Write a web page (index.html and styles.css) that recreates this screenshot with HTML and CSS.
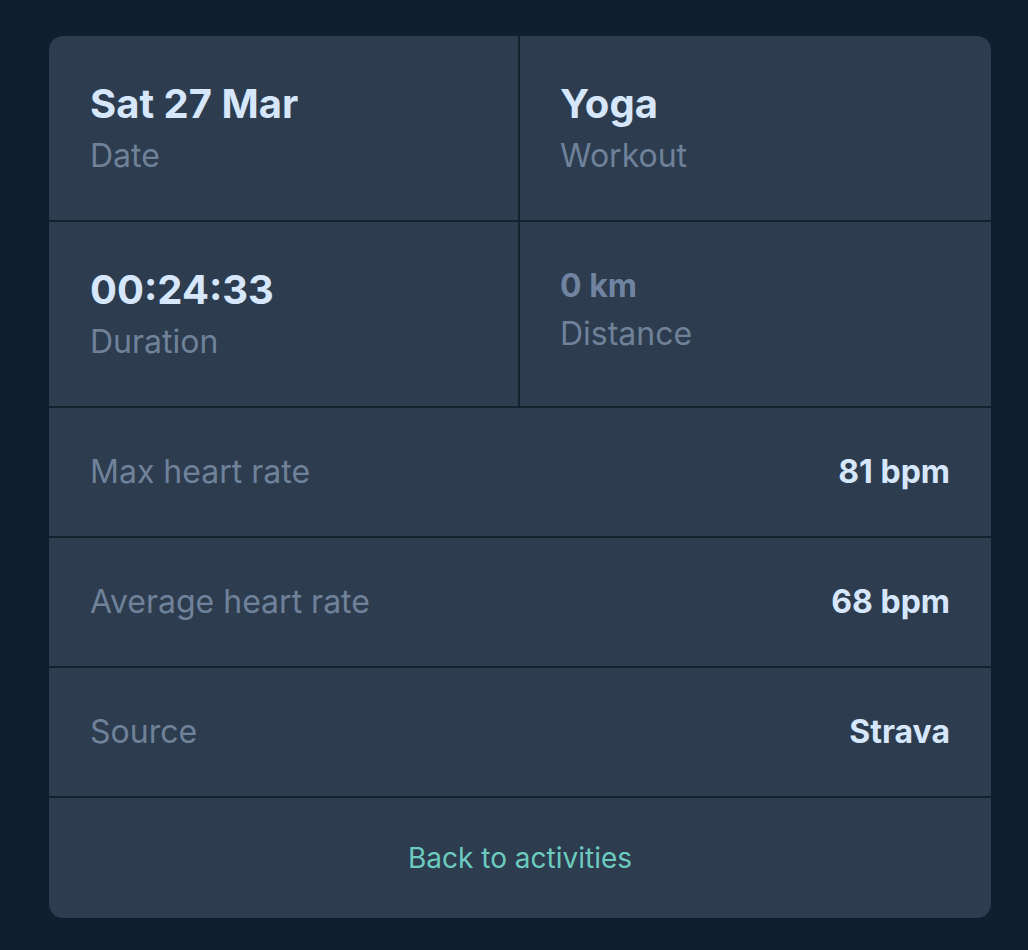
FILE: index.html
```html
<!DOCTYPE html>
<html lang="en">
<head>
<meta charset="utf-8">
<title>Activity</title>
<link rel="stylesheet" href="styles.css">
</head>
<body>
<main class="page">
  <section class="card">
    <div class="grid">
      <div class="cell cell-left">
        <div class="value">Sat 27 Mar</div>
        <div class="label">Date</div>
      </div>
      <div class="cell cell-right">
        <div class="value">Yoga</div>
        <div class="label">Workout</div>
      </div>
      <div class="cell cell-left">
        <div class="value">00:24:33</div>
        <div class="label">Duration</div>
      </div>
      <div class="cell cell-right">
        <div class="value-muted">0 km</div>
        <div class="label">Distance</div>
      </div>
    </div>
    <div class="row">
      <span class="label">Max heart rate</span>
      <span class="row-value">81 bpm</span>
    </div>
    <div class="row">
      <span class="label">Average heart rate</span>
      <span class="row-value">68 bpm</span>
    </div>
    <div class="row">
      <span class="label">Source</span>
      <span class="row-value">Strava</span>
    </div>
    <div class="footer">
      <a class="back" href="#">Back to activities</a>
    </div>
  </section>
</main>
</body>
</html>
```

FILE: styles.css
```css
html, body {
  margin: 0;
  padding: 0;
  background: #111e2e;
}

body {
  font-family: Inter, "Noto Sans", sans-serif;
  -webkit-font-smoothing: antialiased;
}

.page {
  padding: 36px 37px 32px 49px;
}

.card {
  background: #2d3c4f;
  border-radius: 14px;
  overflow: hidden;
}

.grid {
  display: grid;
  grid-template-columns: 471px 1fr;
}

.cell {
  padding: 40px 41px;
  border-bottom: 2px solid #14212f;
}

.cell-left {
  border-right: 2px solid #14212f;
}

.cell-right {
  padding-left: 40px;
}

.value {
  font-size: 40px;
  line-height: 56px;
  font-weight: 700;
  color: #d6e7fc;
}

.value-muted {
  font-size: 32px;
  line-height: 48px;
  font-weight: 700;
  color: #7083a0;
}

.label {
  font-size: 32px;
  line-height: 48px;
  font-weight: 400;
  color: #6f8299;
}

.row {
  display: flex;
  justify-content: space-between;
  align-items: center;
  padding: 40px 41px 40px 41px;
  border-bottom: 2px solid #14212f;
}

.row-value {
  font-size: 32px;
  line-height: 48px;
  font-weight: 700;
  color: #d6e7fc;
}

.footer {
  padding: 40px;
  text-align: center;
}

.back {
  font-size: 28px;
  line-height: 40px;
  color: #6ccbbf;
  text-decoration: none;
}
```
